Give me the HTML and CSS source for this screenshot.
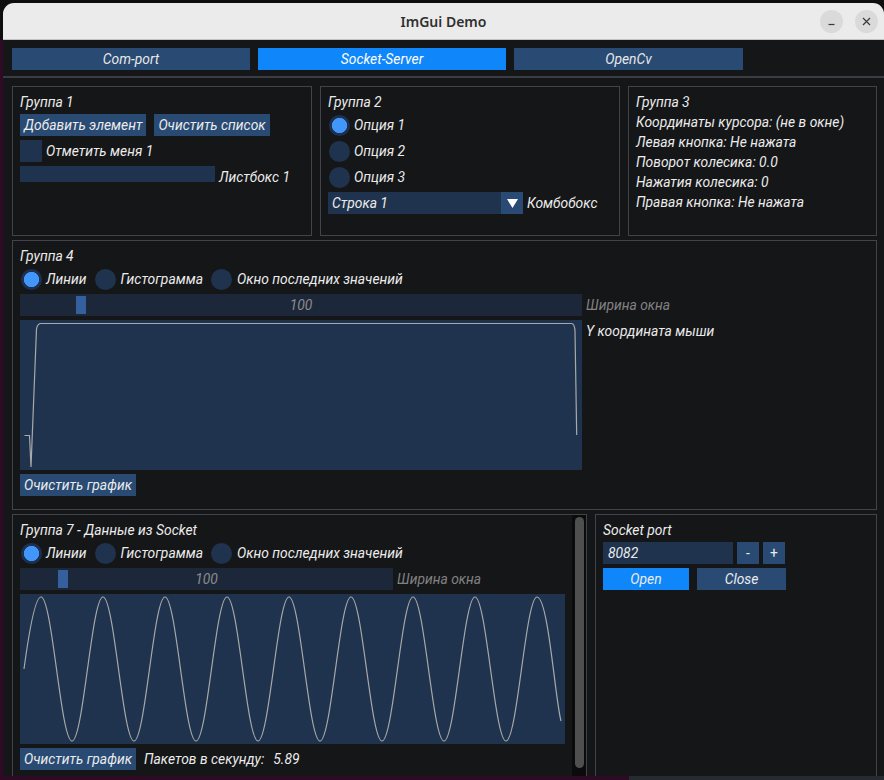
FILE: index.html
```html
<!DOCTYPE html>
<html lang="ru">
<head>
<meta charset="utf-8">
<title>ImGui Demo</title>
<link rel="stylesheet" href="styles.css">
</head>
<body>
<div class="screen">
  <div class="top-gap"></div>
  <div class="mid">
    <div class="desk-left"></div>
    <div class="win">
      <div class="titlebar">
        <span></span>
        <span class="title">ImGui Demo</span>
        <div class="wctl">
          <span class="wbtn"><svg width="23" height="23" viewBox="0 0 23 23"><line x1="8.5" y1="14.5" x2="14.5" y2="14.5" stroke="#3a3a3a" stroke-width="1.2"/></svg></span>
          <span class="wbtn"><svg width="23" height="23" viewBox="0 0 23 23"><path d="M8 8 L15 15 M15 8 L8 15" stroke="#3a3a3a" stroke-width="1.2" fill="none"/></svg></span>
        </div>
      </div>
      <div class="app">
        <div class="tabs">
          <div class="tab w1">Com-port</div>
          <div class="tab active w2">Socket-Server</div>
          <div class="tab w3">OpenCv</div>
        </div>
        <div class="sep"></div>
        <div class="area">
          <div class="row1">
            <section class="g g1">
              <div class="t">Группа 1</div>
              <div class="brow">
                <div class="btn">Добавить элемент</div>
                <div class="btn">Очистить список</div>
              </div>
              <div class="item"><span class="chk"></span><span class="t">Отметить меня 1</span></div>
              <div class="lbrow"><span class="lb"></span><span class="lbl">Листбокс 1</span></div>
            </section>
            <section class="g g2">
              <div class="t">Группа 2</div>
              <div class="item"><span class="radio on"></span><span class="t">Опция 1</span></div>
              <div class="item"><span class="radio"></span><span class="t">Опция 2</span></div>
              <div class="item"><span class="radio"></span><span class="t">Опция 3</span></div>
              <div class="item">
                <div class="combo">
                  <span class="combo-txt">Строка 1</span>
                  <span class="combo-arrow"><svg width="11" height="9" viewBox="0 0 11 9"><path d="M0 0 H11 L5.5 9 Z" fill="#ffffff"/></svg></span>
                </div>
                <span class="t">Комбобокс</span>
              </div>
            </section>
            <section class="g g3">
              <div class="t">Группа 3</div>
              <div class="t">Координаты курсора: (не в окне)</div>
              <div class="t">Левая кнопка: Не нажата</div>
              <div class="t">Поворот колесика: 0.0</div>
              <div class="t">Нажатия колесика: 0</div>
              <div class="t">Правая кнопка: Не нажата</div>
            </section>
          </div>

          <section class="g g4">
            <div class="t">Группа 4</div>
            <div class="rrow">
              <div class="item"><span class="radio on"></span><span class="t">Линии</span></div>
              <div class="item"><span class="radio"></span><span class="t">Гистограмма</span></div>
              <div class="item"><span class="radio"></span><span class="t">Окно последних значений</span></div>
            </div>
            <div class="item">
              <div class="slider s1"><span class="grab g-s1"></span><span class="sval">100</span></div>
              <span class="t dim">Ширина окна</span>
            </div>
            <div class="plotrow">
              <div class="plot p1">
                <svg width="562" height="150" viewBox="0 0 562 150"><path d="M4.5,115.5 L9.5,115.5 L11,147 L16.5,9 Q17.5,3.5 21,3.5 L551.5,3.5 Q554.5,3.5 555,11 L556.7,115" fill="none" stroke="#a9a9a9" stroke-width="1.2"/></svg>
              </div>
              <span class="t plbl">Y координата мыши</span>
            </div>
            <div class="btn self">Очистить график</div>
          </section>

          <div class="row3">
            <section class="g g7">
              <div class="g7c">
                <div class="t">Группа 7 - Данные из Socket</div>
                <div class="rrow">
                  <div class="item"><span class="radio on"></span><span class="t">Линии</span></div>
                  <div class="item"><span class="radio"></span><span class="t">Гистограмма</span></div>
                  <div class="item"><span class="radio"></span><span class="t">Окно последних значений</span></div>
                </div>
                <div class="item">
                  <div class="slider s2"><span class="grab g-s2"></span><span class="sval">100</span></div>
                  <span class="t dim">Ширина окна</span>
                </div>
                <div class="plot p2">
                  <svg width="545" height="150" viewBox="0 0 545 150"><path d="M4,75 C9,38 15,3 21,3 C32.27,3 40.73,147 52,147 S71.73,3 83,3 S102.73,147 114,147 S133.73,3 145,3 S164.73,147 176,147 S195.73,3 207,3 S226.73,147 238,147 S257.73,3 269,3 S288.73,147 300,147 S319.73,3 331,3 S350.73,147 362,147 S381.73,3 393,3 S412.73,147 424,147 S443.73,3 455,3 S474.73,147 486,147 S505.73,3 517,3 C528.27,3 535,105 541,127" fill="none" stroke="#a9a9a9" stroke-width="1.2"/></svg>
                </div>
                <div class="item">
                  <div class="btn">Очистить график</div>
                  <span class="t pk">Пакетов в секунду:</span>
                  <span class="t pv">5.89</span>
                </div>
              </div>
              <div class="sb"><span class="thumb"></span></div>
            </section>
            <section class="g gs">
              <div class="t">Socket port</div>
              <div class="item">
                <div class="inp">8082</div>
                <div class="btn sq">-</div>
                <div class="btn sq">+</div>
              </div>
              <div class="brow">
                <div class="btn open">Open</div>
                <div class="btn close">Close</div>
              </div>
            </section>
          </div>
        </div>
      </div>
    </div>
  </div>
  <div class="dock"></div>
</div>
</body>
</html>
```

FILE: styles.css
```css
* { box-sizing: border-box; margin: 0; padding: 0; }
html, body { width: 884px; height: 780px; overflow: hidden; background: #0e0e0e; }
body { font-family: Roboto, "Noto Sans", sans-serif; }

.screen { width: 884px; height: 780px; display: flex; flex-direction: column; }
.top-gap { height: 3px; flex: none; }
.mid { flex: 1; display: flex; min-height: 0; }
.desk-left { width: 3px; flex: none; background: linear-gradient(#0e0e0e 0 37px, #2f0a25 37px); }
.dock { height: 4px; flex: none; background: linear-gradient(90deg, #2f0a25 0 629px, #262a31 629px); }

.win { flex: 1; min-width: 0; display: flex; flex-direction: column; }
.titlebar {
  height: 37px; flex: none; background: #ebebeb;
  border-radius: 11px 11px 0 0; border-bottom: 1px solid #c2c2c2;
  display: grid; grid-template-columns: 1fr auto 1fr; align-items: center;
}
.title { font-family: "Noto Sans", sans-serif; font-weight: 600; font-size: 14px; color: #303030; }
.wctl { justify-self: end; display: flex; gap: 12px; padding-right: 6px; }
.wbtn { width: 23px; height: 23px; border-radius: 50%; background: #dadada; display: block; }
.wbtn svg { display: block; }

.app {
  flex: 1; min-height: 0; overflow: hidden; background: #151618;
  color: #ececec; font-style: italic; font-size: 13.85px;
}
.tabs { display: flex; gap: 8px; padding: 8px 0 0 9px; }
.tab {
  height: 22px; background: #284a73; color: #e8e8e8;
  display: flex; align-items: center; justify-content: center; white-space: nowrap;
}
.tab.w1 { width: 238px; }
.tab.w2 { width: 248px; }
.tab.w3 { width: 229px; }
.tab.active { background: #0f86fa; color: #fff; }
.sep { margin-top: 6px; height: 2px; background: #3b3c44; }

.area { padding: 8px 0 0 9px; display: flex; flex-direction: column; gap: 4px; }
.row1 { display: flex; gap: 8px; height: 150px; }
.row3 { display: flex; gap: 8px; height: 290px; }

.g { border: 1px solid #41424c; padding: 7px; display: flex; flex-direction: column; gap: 4px; }
.g1 { width: 300px; }
.g2 { width: 300px; }
.g3 { width: 249px; }
.g4 { width: 865px; height: 270px; }
.g7 { width: 575px; padding: 0; flex-direction: row; gap: 0; }
.gs { width: 282px; }

.t { line-height: 16px; white-space: nowrap; }
.dim { color: #828282; }

.brow { display: flex; gap: 8px; }
.btn {
  height: 22px; padding: 0 4px; background: #284a73;
  display: flex; align-items: center; justify-content: center; white-space: nowrap;
}
.btn.self { align-self: flex-start; }
.item { display: flex; align-items: center; gap: 4px; height: 22px; }
.chk { width: 22px; height: 22px; background: #20334e; flex: none; }
.radio { width: 22px; height: 22px; flex: none; display: flex; align-items: center; justify-content: center; }
.radio::before { content: ""; width: 21px; height: 21px; border-radius: 50%; background: #20334e; }
.radio.on::before { background: radial-gradient(circle, #4296fa 0 7.3px, #1e3050 7.9px); }

.lbrow { display: flex; align-items: flex-start; gap: 4px; height: 22px; }
.lb { width: 195px; height: 16px; background: #20334e; }
.lbl { line-height: 22px; white-space: nowrap; }

.combo { width: 195px; height: 22px; display: flex; background: #20334e; }
.combo-txt { flex: 1; padding-left: 4px; line-height: 22px; }
.combo-arrow { width: 22px; background: #284a73; display: flex; align-items: center; justify-content: center; }
.combo-arrow svg { display: block; }

.rrow { display: flex; gap: 8px; }

.slider { height: 22px; background: #1c283a; display: grid; align-items: center; flex: none; }
.slider > * { grid-area: 1 / 1; }
.s1 { width: 562px; }
.s2 { width: 373px; }
.grab { width: 10px; height: 18px; background: #34619e; justify-self: start; }
.g-s1 { margin-left: 56px; }
.g-s2 { margin-left: 38px; }
.sval { justify-self: center; color: #8c8c8c; line-height: 16px; }

.plotrow { display: flex; align-items: flex-start; gap: 4px; }
.plot { background: #20334e; flex: none; }
.plot svg { display: block; }
.p1 { width: 562px; height: 150px; }
.p2 { width: 545px; height: 150px; }
.plbl { padding-top: 3px; }

.g7c { flex: 1; padding: 7px 0 0 7px; display: flex; flex-direction: column; gap: 4px; min-width: 0; }
.pk { margin-left: 4px; }
.pv { margin-left: 5px; }
.sb { width: 14px; background: #0b0b0c; padding: 2px 2px 0 3px; }
.thumb { display: block; width: 9px; height: 251px; border-radius: 5px; background: #4f4f4f; }

.inp { width: 130px; height: 22px; background: #20334e; padding-left: 5px; line-height: 22px; }
.btn.sq { width: 22px; padding: 0; font-style: normal; }
.btn.open { width: 86px; background: #0f86fa; }
.btn.close { width: 89px; }
```
